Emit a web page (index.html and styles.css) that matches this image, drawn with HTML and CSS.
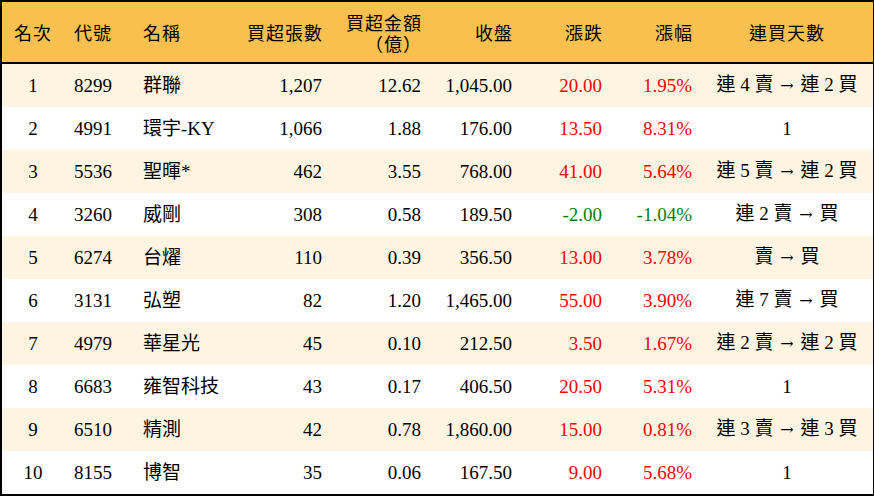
FILE: index.html
```html
<!DOCTYPE html>
<html lang="zh-Hant">
<head>
<meta charset="utf-8">
<title>買超排行</title>
<link rel="stylesheet" href="styles.css">
</head>
<body>
<div class="board">
  <div class="row head">
    <div class="c center">名次</div>
    <div class="c left">代號</div>
    <div class="c left">名稱</div>
    <div class="c right">買超張數</div>
    <div class="c right two"><span>買超金額</span><span>（億）</span></div>
    <div class="c right">收盤</div>
    <div class="c right">漲跌</div>
    <div class="c right">漲幅</div>
    <div class="c center">連買天數</div>
  </div>
  <div class="row odd">
    <div class="c center">1</div><div class="c left">8299</div><div class="c left">群聯</div>
    <div class="c right">1,207</div><div class="c right">12.62</div><div class="c right">1,045.00</div>
    <div class="c right up">20.00</div><div class="c right up">1.95%</div><div class="c center">連 4 賣 <span class="arr">→</span> 連 2 買</div>
  </div>
  <div class="row">
    <div class="c center">2</div><div class="c left">4991</div><div class="c left">環宇-KY</div>
    <div class="c right">1,066</div><div class="c right">1.88</div><div class="c right">176.00</div>
    <div class="c right up">13.50</div><div class="c right up">8.31%</div><div class="c center">1</div>
  </div>
  <div class="row odd">
    <div class="c center">3</div><div class="c left">5536</div><div class="c left">聖暉*</div>
    <div class="c right">462</div><div class="c right">3.55</div><div class="c right">768.00</div>
    <div class="c right up">41.00</div><div class="c right up">5.64%</div><div class="c center">連 5 賣 <span class="arr">→</span> 連 2 買</div>
  </div>
  <div class="row">
    <div class="c center">4</div><div class="c left">3260</div><div class="c left">威剛</div>
    <div class="c right">308</div><div class="c right">0.58</div><div class="c right">189.50</div>
    <div class="c right down">-2.00</div><div class="c right down">-1.04%</div><div class="c center">連 2 賣 <span class="arr">→</span> 買</div>
  </div>
  <div class="row odd">
    <div class="c center">5</div><div class="c left">6274</div><div class="c left">台燿</div>
    <div class="c right">110</div><div class="c right">0.39</div><div class="c right">356.50</div>
    <div class="c right up">13.00</div><div class="c right up">3.78%</div><div class="c center">賣 <span class="arr">→</span> 買</div>
  </div>
  <div class="row">
    <div class="c center">6</div><div class="c left">3131</div><div class="c left">弘塑</div>
    <div class="c right">82</div><div class="c right">1.20</div><div class="c right">1,465.00</div>
    <div class="c right up">55.00</div><div class="c right up">3.90%</div><div class="c center">連 7 賣 <span class="arr">→</span> 買</div>
  </div>
  <div class="row odd">
    <div class="c center">7</div><div class="c left">4979</div><div class="c left">華星光</div>
    <div class="c right">45</div><div class="c right">0.10</div><div class="c right">212.50</div>
    <div class="c right up">3.50</div><div class="c right up">1.67%</div><div class="c center">連 2 賣 <span class="arr">→</span> 連 2 買</div>
  </div>
  <div class="row">
    <div class="c center">8</div><div class="c left">6683</div><div class="c left">雍智科技</div>
    <div class="c right">43</div><div class="c right">0.17</div><div class="c right">406.50</div>
    <div class="c right up">20.50</div><div class="c right up">5.31%</div><div class="c center">1</div>
  </div>
  <div class="row odd">
    <div class="c center">9</div><div class="c left">6510</div><div class="c left">精測</div>
    <div class="c right">42</div><div class="c right">0.78</div><div class="c right">1,860.00</div>
    <div class="c right up">15.00</div><div class="c right up">0.81%</div><div class="c center">連 3 賣 <span class="arr">→</span> 連 3 買</div>
  </div>
  <div class="row">
    <div class="c center">10</div><div class="c left">8155</div><div class="c left">博智</div>
    <div class="c right">35</div><div class="c right">0.06</div><div class="c right">167.50</div>
    <div class="c right up">9.00</div><div class="c right up">5.68%</div><div class="c center">1</div>
  </div>
</div>
</body>
</html>
```
FILE: styles.css
```css
* { box-sizing: border-box; }
html, body { margin: 0; padding: 0; background: #ffffff; }
body {
  font-family: "Liberation Serif", "Noto Sans CJK TC", serif;
  font-size: 19px;
  color: #000;
}
.board {
  width: 874px;
  height: 496px;
  border: 2px solid #000;
  border-right-width: 1px;
  display: flex;
  flex-direction: column;
  background: #fff;
}
.row {
  display: grid;
  grid-template-columns: 62px 69px 97px 102px 99px 91px 90px 90px 170px;
  height: 43px;
  align-items: center;
}
.row.odd { background: #fdf5e1; }
.row.head {
  height: 62px;
  background: #f8c14f;
  border-bottom: 2px solid #000;
  font-family: "Noto Sans CJK TC", serif;
  font-size: 18px;
  letter-spacing: 1px;
}
.c { white-space: nowrap; line-height: 22px; }
.center { text-align: center; }
.left { padding-left: 10px; }
.right { text-align: right; padding-right: 10px; }
.head .right { padding-right: 9px; }
.two { display: flex; flex-direction: column; align-items: flex-end; gap: 1px; line-height: 20px; }
.arr { font-family: "DejaVu Serif", serif; font-size: 16px; margin: 0 2px; }
.up { color: #ff0000; }
.down { color: #008000; }
```
